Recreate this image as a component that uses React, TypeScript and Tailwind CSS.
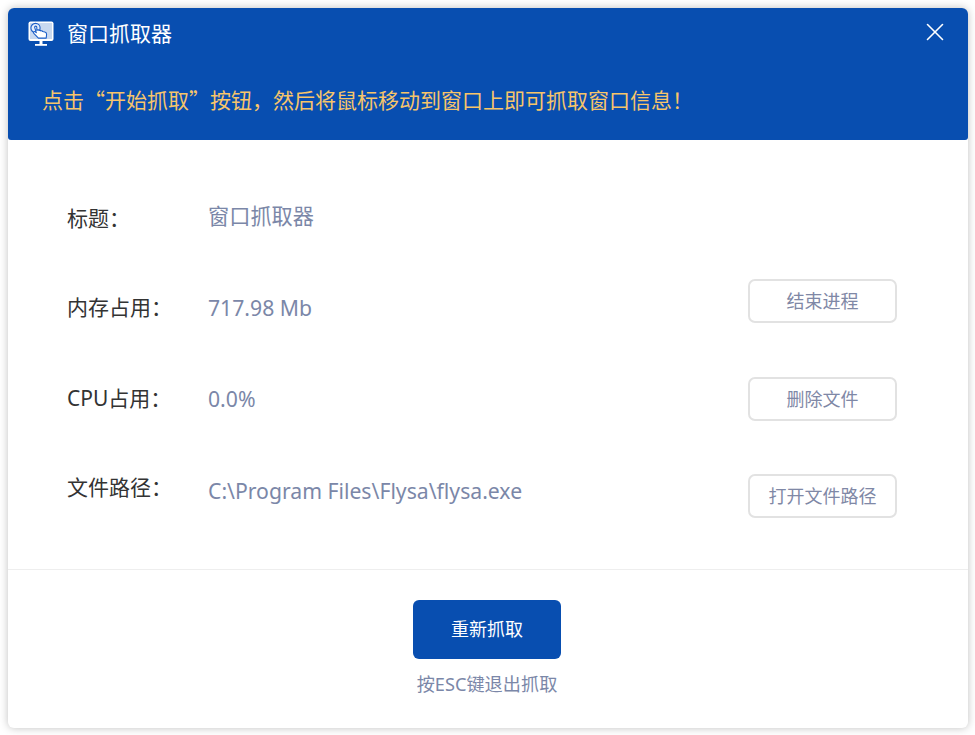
import { X } from 'lucide-react'

const font = { fontFamily: '"Noto Sans", "Noto Sans CJK SC", sans-serif' }
const cjkFont = { fontFamily: '"Noto Sans CJK SC", "Noto Sans", sans-serif' }

function AppIcon() {
  return (
    <svg width="26" height="26" viewBox="0 0 26 26" className="shrink-0">
      <rect x="0.5" y="0.5" width="25" height="19.5" rx="2" fill="#ffffff" />
      <rect x="2" y="2" width="22" height="16" fill="#c9d9f0" />
      <rect x="11.5" y="20" width="3" height="3" fill="#ffffff" />
      <rect x="7" y="23" width="12" height="1.8" fill="#ffffff" />
      <circle cx="7.5" cy="7" r="4.6" fill="#e6eefa" stroke="#1d5fc8" strokeWidth="1.1" />
      <path
        d="M6.6 6.2c0-1.5 2.2-1.5 2.2 0v3l1-.3c.7-.2 1.2.1 1.4.6.6-.4 1.4-.2 1.7.4.7-.4 1.5 0 1.7.6l2.2.5c1.2.3 1.9 1.3 1.8 2.5l-.4 3.6h-7.8l-4.6-4.8c-.9-1.1.5-2.4 1.5-1.5l1 .9z"
        fill="#ffffff"
        stroke="#1d5fc8"
        strokeWidth="1.1"
        strokeLinejoin="round"
      />
    </svg>
  )
}

function InfoRow({
  label,
  value,
  action,
  className,
  labelClass,
  valueClass,
  actionClass,
}: {
  label: string
  value: string
  action?: string
  className: string
  labelClass?: string
  valueClass?: string
  actionClass?: string
}) {
  return (
    <div className={`flex items-center pl-[59px] pr-[71px] ${className}`}>
      <span className={`w-[141px] shrink-0 text-[21px] text-[#333333] ${labelClass ?? ''}`}>{label}</span>
      <span className={`flex-1 text-[21.2px] text-[#7b87a8] ${valueClass ?? ''}`}>{value}</span>
      {action ? (
        <button className={`h-[44px] w-[149px] rounded-[7px] border-2 border-[#e2e2e2] bg-white text-[18px] text-[#7f88a6] ${actionClass ?? ''}`}>
          {action}
        </button>
      ) : null}
    </div>
  )
}

export default function App() {
  return (
    <div className="h-[735px] w-[975px] bg-white p-2" style={font}>
      <div className="flex h-[720px] w-[960px] flex-col overflow-hidden rounded-md bg-white shadow-[0_0_8px_rgba(0,0,0,0.25)]">
        <header className="h-[132px] rounded-b-[3px] bg-[#084eb0] pl-[20px] pr-[18px]">
          <div className="flex h-[50px] items-center pt-[1px]">
            <AppIcon />
            <span className="ml-[13px] text-[21px] text-white">窗口抓取器</span>
            <X className="mb-[4px] ml-auto h-[30px] w-[30px] text-white" strokeWidth={1.3} />
          </div>
          <p className="ml-[14px] mt-[23px] text-[21px] leading-[36px] text-[#f7c56a]" style={cjkFont}>
            点击“开始抓取”按钮，然后将鼠标移动到窗口上即可抓取窗口信息！
          </p>
        </header>

        <div className="h-[430px] border-b border-[#eeeeee] pt-[48px]">
          <InfoRow className="h-[58px]" labelClass="mt-[3px]" valueClass="mb-[2px]" label="标题：" value="窗口抓取器" />
          <InfoRow className="mt-[33px] h-[58px]" actionClass="mb-[14px]" label="内存占用：" value="717.98 Mb" action="结束进程" />
          <InfoRow className="mt-[33px] h-[58px]" label="CPU占用：" value="0.0%" action="删除文件" />
          <InfoRow
            className="mt-[33px] h-[58px]"
            labelClass="mb-[5px]"
            valueClass="mt-[1px]"
            actionClass="mt-[12px]"
            label="文件路径："
            value="C:\Program Files\Flysa\flysa.exe"
            action="打开文件路径"
          />
        </div>

        <div className="flex flex-1 flex-col items-center pt-[30px]">
          <button className="mr-[2px] h-[59px] w-[148px] rounded-md bg-[#084eb0] text-[18px] text-white">重新抓取</button>
          <span className="mr-[2px] mt-[12px] text-[18.2px] text-[#7b87a8]">按ESC键退出抓取</span>
        </div>
      </div>
    </div>
  )
}
